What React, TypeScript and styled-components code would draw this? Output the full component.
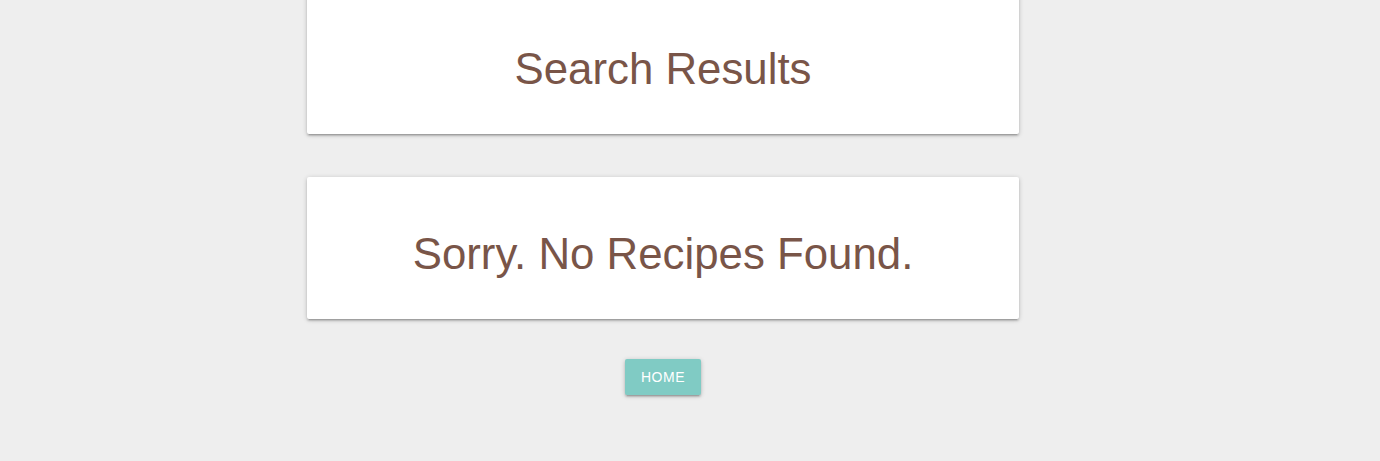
import React from "react";
import styled, { createGlobalStyle } from "styled-components";

const Global = createGlobalStyle`
  html, body {
    margin: 0;
    padding: 0;
    background: #eeeeee;
    font-family: "Liberation Sans", Arial, sans-serif;
  }
`;

const Page = styled.div`
  min-height: 461px;
  overflow: hidden;
`;

const Column = styled.main`
  width: 712px;
  margin: -8px 0 0 307px;
  display: flex;
  flex-direction: column;
  align-items: center;
`;

const Card = styled.section<{ $gap?: number }>`
  width: 100%;
  box-sizing: border-box;
  background: #ffffff;
  border-radius: 2px;
  padding: 53px 24px 41px;
  margin-bottom: ${(p) => p.$gap ?? 0}px;
  box-shadow: 0 2px 2px 0 rgba(0, 0, 0, 0.14), 0 3px 1px -2px rgba(0, 0, 0, 0.12),
    0 1px 5px 0 rgba(0, 0, 0, 0.2);
`;

const Heading = styled.h3`
  margin: 0;
  text-align: center;
  font-size: 43.8px;
  line-height: 48px;
  font-weight: 400;
  color: #795548;
`;

const HomeButton = styled.button`
  height: 36px;
  padding: 0 16px;
  border: none;
  border-radius: 2px;
  background: #80cbc4;
  color: #ffffff;
  font-family: "Liberation Sans", Arial, sans-serif;
  font-size: 14px;
  letter-spacing: 0.5px;
  text-transform: uppercase;
  cursor: pointer;
  box-shadow: 0 2px 2px 0 rgba(0, 0, 0, 0.14), 0 3px 1px -2px rgba(0, 0, 0, 0.12),
    0 1px 5px 0 rgba(0, 0, 0, 0.2);
`;

export default function App() {
  return (
    <Page>
      <Global />
      <Column>
        <Card $gap={43}>
          <Heading>Search Results</Heading>
        </Card>
        <Card $gap={40}>
          <Heading>Sorry. No Recipes Found.</Heading>
        </Card>
        <HomeButton>Home</HomeButton>
      </Column>
    </Page>
  );
}
